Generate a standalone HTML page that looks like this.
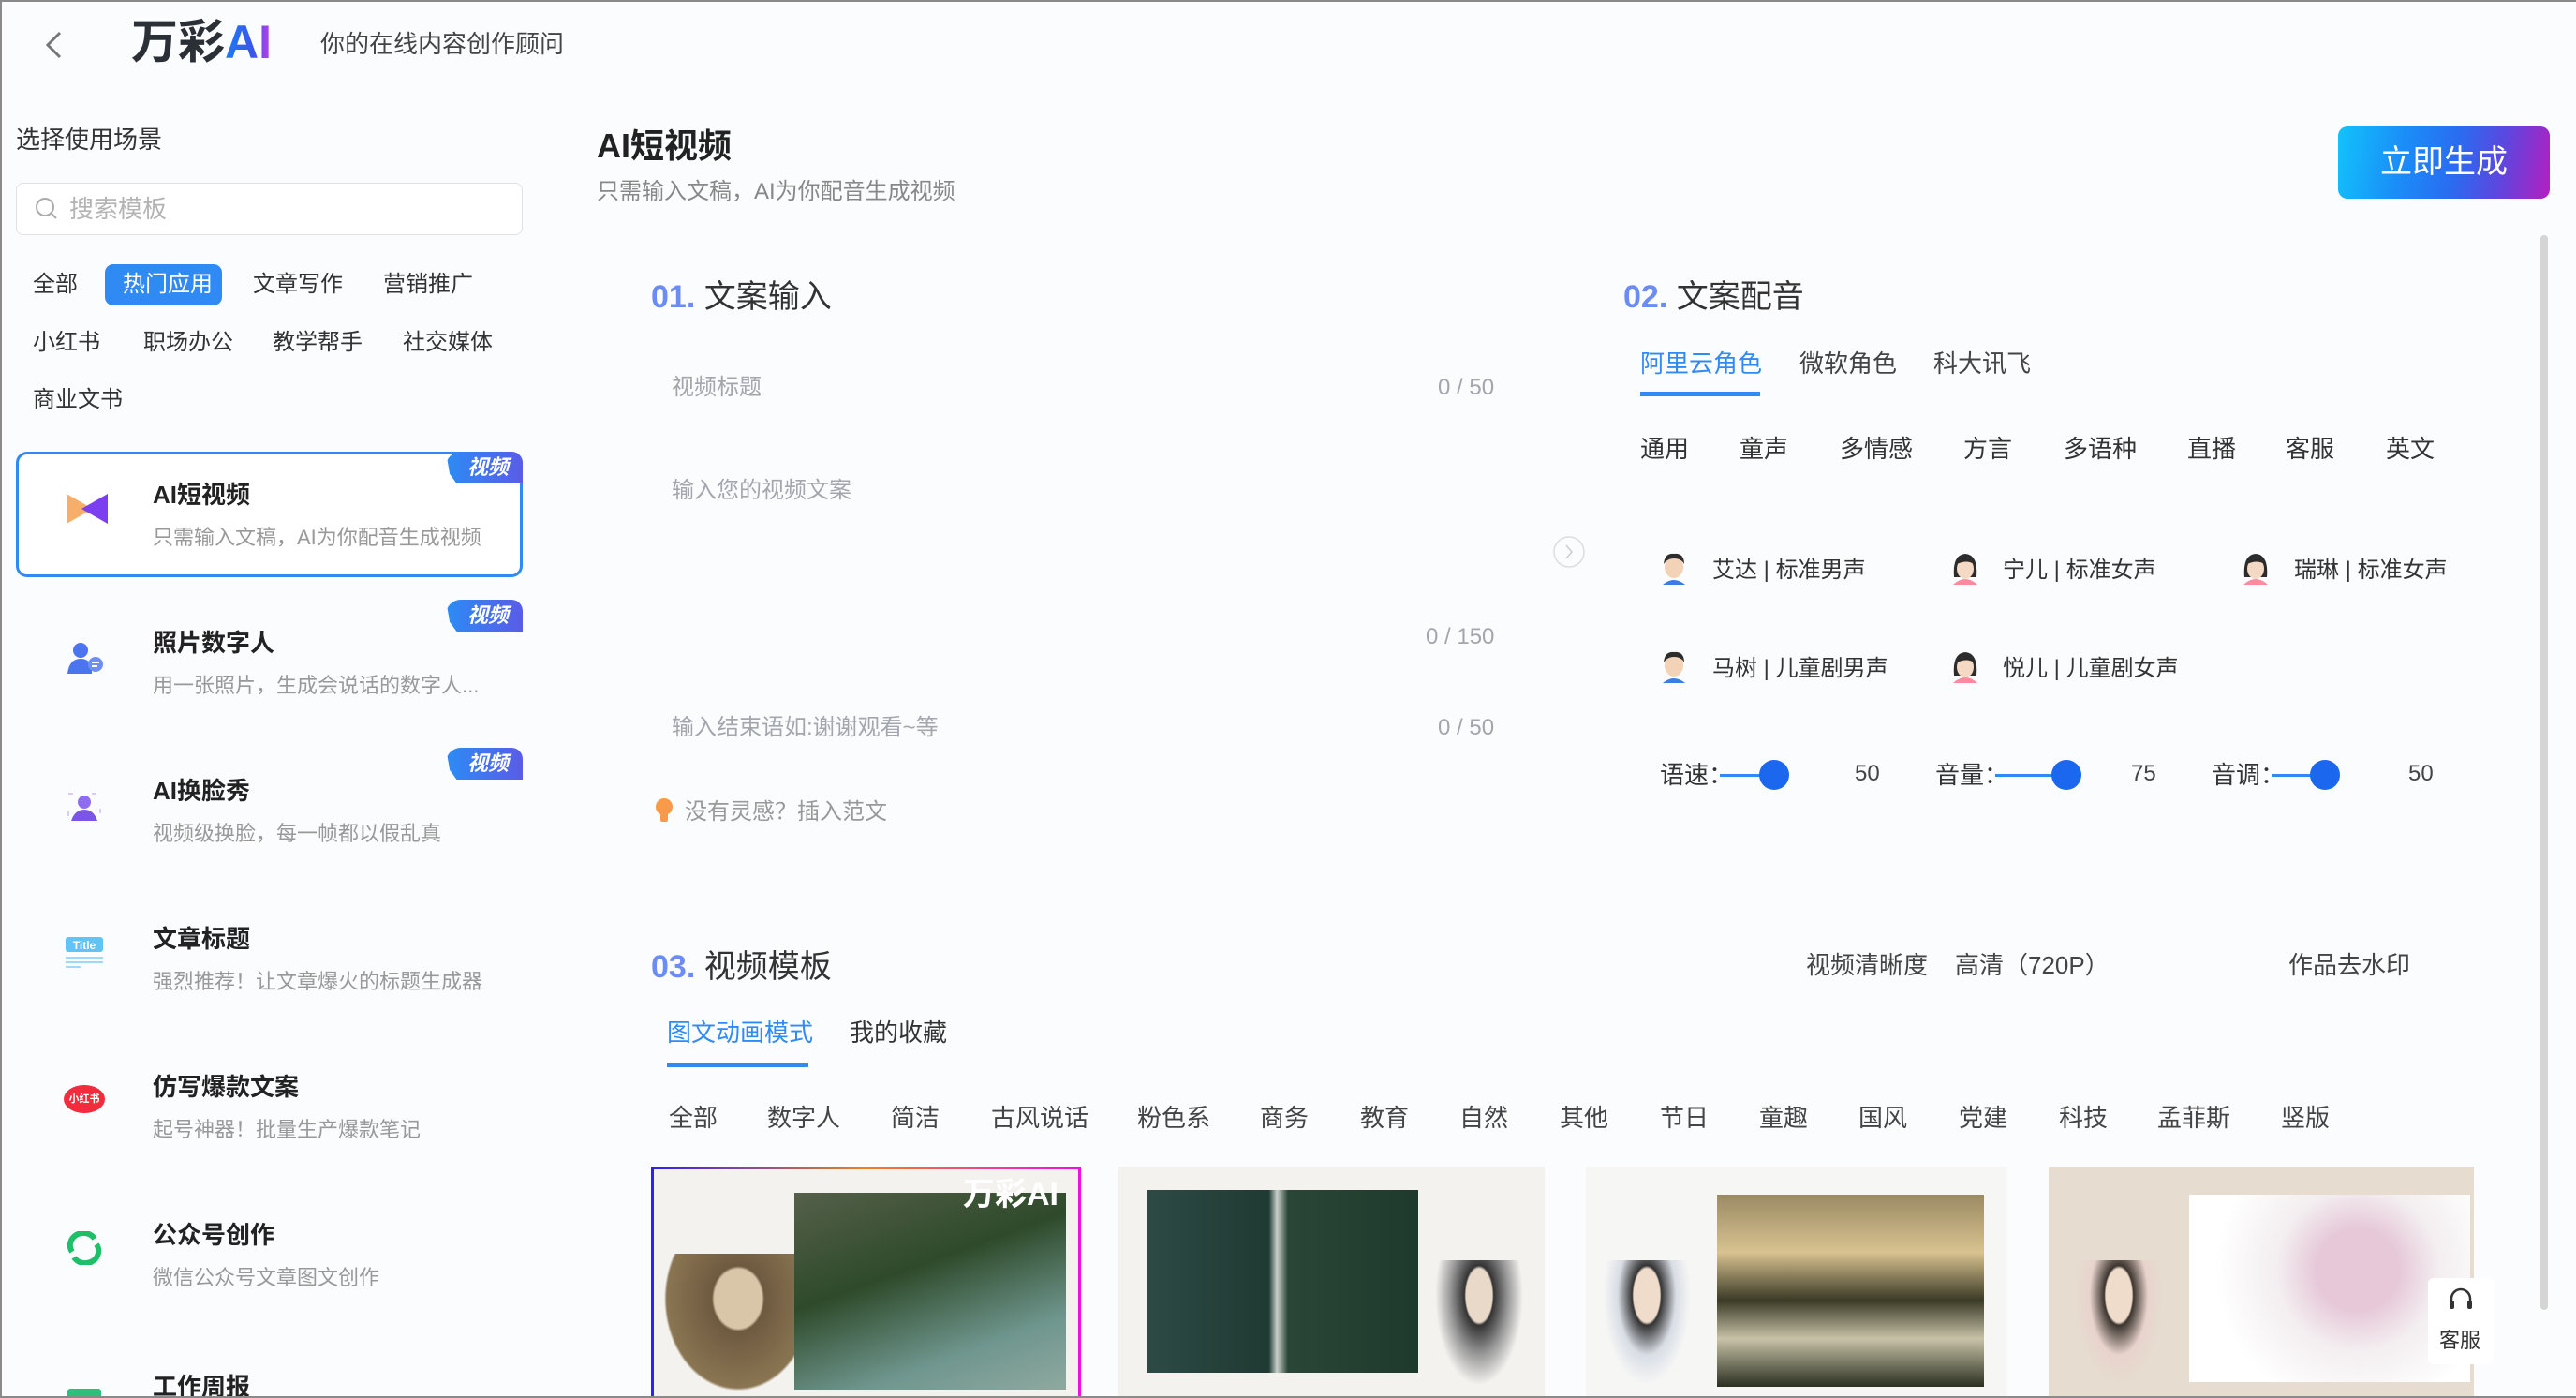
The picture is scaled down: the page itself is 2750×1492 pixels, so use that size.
<!DOCTYPE html>
<html style="width:2750px;height:1492px;overflow:hidden"><head><meta charset="utf-8">
<style>
*{margin:0;padding:0;box-sizing:border-box}
html,body{width:2750px;height:1492px;overflow:hidden}
body{background:#fbfcfd;font-family:"Liberation Sans","Noto Sans CJK SC",sans-serif;color:#333;position:relative}
.a{position:absolute;white-space:nowrap;line-height:1}
.frame{position:absolute;left:0;top:0;width:2750px;height:1492px;border:2px solid #8a8a8a;border-right:none;pointer-events:none}
.g{color:#a3a6ad}
.t24{font-size:24px}.t26{font-size:26px}.t22{font-size:22px}
.card{position:absolute;left:17px;width:541px;height:134px}
.card .tt{position:absolute;left:146px;top:26px;font-size:26px;font-weight:bold;color:#222}
.card .dd{position:absolute;left:146px;top:74px;font-size:22px;color:#999}
.badge{position:absolute;right:0;top:0;width:82px;height:34px;background:linear-gradient(90deg,#2c8cf4,#5a5ce8);border-radius:16px 12px 0 0;clip-path:polygon(0 0,100% 0,100% 100%,14% 100%,5% 70%);color:#fff;font-size:22px;font-style:italic;font-weight:bold;text-align:center;line-height:34px;padding-left:8px}
.sec{font-size:34px;color:#333}
.sec b{color:#6b8cf5;font-weight:bold}
.thumb{position:absolute;top:1245px;height:247px;overflow:hidden;background:#f3f2ef}
</style></head><body>

<svg class="a" style="left:46px;top:32px" width="22" height="32" viewBox="0 0 22 32"><path d="M18 3 L5 16 L18 29" fill="none" stroke="#777" stroke-width="3"/></svg>
<div class="a" style="left:140px;top:20px;font-size:50px;font-weight:bold;color:#2b2f36">万彩<span style="background:linear-gradient(90deg,#1c7cf5,#3a57e8 60%,#c43de6);-webkit-background-clip:text;background-clip:text;color:transparent">AI</span></div>
<div class="a t26" style="left:342px;top:34px;color:#444">你的在线内容创作顾问</div>

<div class="a t26" style="left:17px;top:136px;color:#333">选择使用场景</div>
<div class="a" style="left:17px;top:195px;width:541px;height:56px;border:1px solid #dfe1e6;border-radius:8px;background:#fff"></div>
<svg class="a" style="left:36px;top:209px" width="26" height="26"><circle cx="12" cy="12" r="9" fill="none" stroke="#aaa" stroke-width="2"/><path d="M19 19 L24 24" stroke="#aaa" stroke-width="2"/></svg>
<div class="a t26" style="left:74px;top:210px;color:#b4b4b4">搜索模板</div>

<div class="a" style="left:112px;top:282px;width:125px;height:44px;background:#2f8bf3;border-radius:9px"></div>
<div class="a t24" style="left:35px;top:292px;color:#333">全部</div>
<div class="a t24" style="left:131px;top:292px;color:#fff">热门应用</div>
<div class="a t24" style="left:270px;top:292px;color:#333">文章写作</div>
<div class="a t24" style="left:409px;top:292px;color:#333">营销推广</div>
<div class="a t24" style="left:35px;top:354px;color:#333">小红书</div>
<div class="a t24" style="left:153px;top:354px;color:#333">职场办公</div>
<div class="a t24" style="left:291px;top:354px;color:#333">教学帮手</div>
<div class="a t24" style="left:430px;top:354px;color:#333">社交媒体</div>
<div class="a t24" style="left:35px;top:415px;color:#333">商业文书</div>

<div class="card" style="top:482px;border:3px solid #2f8bf3;border-radius:12px;background:#fff">
 <div class="badge" style="right:-3px;top:-3px">视频</div>
 <svg style="position:absolute;left:51px;top:42px" width="44" height="32"><polygon points="0,0 28,16 0,32" fill="#f5a55a" opacity=".9"/><polygon points="44,0 16,16 44,32" fill="#7b3ff0"/></svg>
 <div class="tt" style="left:143px;top:23px">AI短视频</div><div class="dd" style="left:143px;top:71px">只需输入文稿，AI为你配音生成视频</div>
</div>
<div class="card" style="top:640px"><div class="badge">视频</div>
 <svg style="position:absolute;left:55px;top:45px" width="40" height="38"><circle cx="14" cy="9" r="8" fill="#4d74f0"/><path d="M0 34 Q2 18 14 18 Q24 18 26 28 L26 34Z" fill="#4d74f0"/><circle cx="30" cy="24" r="8" fill="#6f8ef5"/><path d="M26 22h8M26 26h6" stroke="#fff" stroke-width="2"/></svg>
 <div class="tt">照片数字人</div><div class="dd">用一张照片，生成会说话的数字人...</div></div>
<div class="card" style="top:798px"><div class="badge">视频</div>
 <svg style="position:absolute;left:55px;top:48px" width="36" height="30"><rect x="1" y="1" width="34" height="28" fill="none" stroke="#b69cf5" stroke-dasharray="5 20"/><circle cx="18" cy="10" r="7" fill="#8f6cf0"/><path d="M4 30 Q8 18 18 18 Q28 18 32 30Z" fill="#7b55e8"/></svg>
 <div class="tt">AI换脸秀</div><div class="dd">视频级换脸，每一帧都以假乱真</div></div>
<div class="card" style="top:956px">
 <svg style="position:absolute;left:53px;top:44px" width="40" height="36"><rect x="0" y="0" width="40" height="16" rx="3" fill="#62c3f7"/><text x="20" y="13" font-size="12" fill="#fff" font-weight="bold" text-anchor="middle" font-family="Liberation Sans">Title</text><rect x="0" y="21" width="40" height="2" fill="#9ed8fa"/><rect x="0" y="26" width="40" height="2" fill="#9ed8fa"/><rect x="0" y="31" width="16" height="2" fill="#9ed8fa"/></svg>
 <div class="tt">文章标题</div><div class="dd">强烈推荐！让文章爆火的标题生成器</div></div>
<div class="card" style="top:1114px">
 <div style="position:absolute;left:51px;top:44px;width:44px;height:30px;border-radius:50%;background:#f12c3d;color:#fff;font-size:11px;font-weight:bold;text-align:center;line-height:30px">小红书</div>
 <div class="tt">仿写爆款文案</div><div class="dd">起号神器！批量生产爆款笔记</div></div>
<div class="card" style="top:1272px">
 <svg style="position:absolute;left:54px;top:42px" width="38" height="36"><path d="M6 22 A14 13 0 0 1 30 8" fill="none" stroke="#1fbf6a" stroke-width="6"/><path d="M32 14 A14 13 0 0 1 8 28" fill="none" stroke="#1fbf6a" stroke-width="6"/></svg>
 <div class="tt">公众号创作</div><div class="dd">微信公众号文章图文创作</div></div>
<div class="card" style="top:1430px">
 <div style="position:absolute;left:55px;top:52px;width:36px;height:12px;background:#2bc07c;border-radius:3px 3px 0 0"></div>
 <div class="tt" style="top:30px">工作周报</div></div>

<div class="a" style="left:637px;top:138px;font-size:36px;font-weight:bold;color:#222">AI短视频</div>
<div class="a t24" style="left:637px;top:193px;color:#888">只需输入文稿，AI为你配音生成视频</div>
<div class="a" style="left:2496px;top:135px;width:226px;height:77px;border-radius:10px;background:linear-gradient(100deg,#12c3fb 0%,#1a8ef8 30%,#2a6cf0 55%,#5a48e0 75%,#b41ec0 100%);color:#fff;font-size:34px;text-align:center;line-height:77px">立即生成</div>
<div class="a" style="left:2712px;top:251px;width:8px;height:1147px;background:#d5d5d5;border-radius:4px"></div>

<div class="a sec" style="left:695px;top:300px"><b>01.</b> 文案输入</div>
<div class="a t24 g" style="left:717px;top:402px">视频标题</div>
<div class="a t24 g" style="left:1535px;top:402px">0 / 50</div>
<div class="a t24 g" style="left:717px;top:512px">输入您的视频文案</div>
<div class="a t24 g" style="left:1522px;top:668px">0 / 150</div>
<div class="a t24 g" style="left:717px;top:765px">输入结束语如:谢谢观看~等</div>
<div class="a t24 g" style="left:1535px;top:765px">0 / 50</div>
<svg class="a" style="left:698px;top:850px" width="22" height="30"><circle cx="11" cy="11" r="9" fill="#f89a4a"/><rect x="7" y="18" width="8" height="9" rx="2" fill="#f89a4a"/></svg>
<div class="a t24" style="left:731px;top:855px;color:#999">没有灵感？插入范文</div>
<svg class="a" style="left:1657px;top:571px" width="36" height="36"><circle cx="18" cy="18" r="16" fill="none" stroke="#ddd" stroke-width="1.5"/><path d="M15 11 L21 18 L15 25" fill="none" stroke="#ccc" stroke-width="1.5"/></svg>

<div class="a sec" style="left:1733px;top:300px"><b>02.</b> 文案配音</div>
<div class="a t26" style="left:1751px;top:375px;color:#2f8bf3">阿里云角色</div>
<div class="a t26" style="left:1921px;top:375px;color:#444">微软角色</div>
<div class="a t26" style="left:2064px;top:375px;color:#444">科大讯飞</div>
<div class="a" style="left:1751px;top:418px;width:128px;height:5px;background:#2f8bf3"></div>
<div class="a t26" style="left:1751px;top:466px;color:#333">通用</div>
<div class="a t26" style="left:1857px;top:466px;color:#333">童声</div>
<div class="a t26" style="left:1964px;top:466px;color:#333">多情感</div>
<div class="a t26" style="left:2096px;top:466px;color:#333">方言</div>
<div class="a t26" style="left:2203px;top:466px;color:#333">多语种</div>
<div class="a t26" style="left:2335px;top:466px;color:#333">直播</div>
<div class="a t26" style="left:2440px;top:466px;color:#333">客服</div>
<div class="a t26" style="left:2547px;top:466px;color:#333">英文</div>

<svg width="0" height="0" style="position:absolute"><defs>
<g id="m"><path d="M4 36 Q16 26 28 36Z" fill="#3b7de6"/><ellipse cx="16" cy="17" rx="10" ry="12" fill="#f2d3b8"/><path d="M5 14 Q6 2 16 3 Q27 2 27 14 Q24 8 16 8 Q9 8 5 14Z" fill="#2c2c2c"/></g>
<g id="f"><path d="M3 36 Q16 24 29 36Z" fill="#ff8aa0"/><path d="M4 28 Q2 4 16 3 Q30 4 28 28Z" fill="#2c2c2c"/><ellipse cx="16" cy="19" rx="9" ry="11" fill="#f4d9c4"/><path d="M7 14 Q10 6 16 6 Q23 6 25 14 Q18 9 7 14Z" fill="#2c2c2c"/></g>
</defs></svg>
<svg class="a" style="left:1771px;top:588px" width="32" height="40"><use href="#m"/></svg>
<div class="a t24" style="left:1828px;top:597px;color:#333">艾达 | 标准男声</div>
<svg class="a" style="left:2082px;top:588px" width="32" height="40"><use href="#f"/></svg>
<div class="a t24" style="left:2138px;top:597px;color:#333">宁儿 | 标准女声</div>
<svg class="a" style="left:2392px;top:588px" width="32" height="40"><use href="#f"/></svg>
<div class="a t24" style="left:2449px;top:597px;color:#333">瑞琳 | 标准女声</div>
<svg class="a" style="left:1771px;top:693px" width="32" height="40"><use href="#m"/></svg>
<div class="a t24" style="left:1828px;top:702px;color:#333">马树 | 儿童剧男声</div>
<svg class="a" style="left:2082px;top:693px" width="32" height="40"><use href="#f"/></svg>
<div class="a t24" style="left:2138px;top:702px;color:#333">悦儿 | 儿童剧女声</div>

<div class="a t26" style="left:1772px;top:814px;color:#333">语速：</div>
<div class="a" style="left:1836px;top:826px;width:60px;height:3px;background:#2f8bf3"></div>
<div class="a" style="left:1878px;top:811px;width:32px;height:32px;border-radius:50%;background:#1b67ee"></div>
<div class="a t24" style="left:1980px;top:814px;color:#444">50</div>
<div class="a t26" style="left:2066px;top:814px;color:#333">音量：</div>
<div class="a" style="left:2130px;top:826px;width:80px;height:3px;background:#2f8bf3"></div>
<div class="a" style="left:2190px;top:811px;width:32px;height:32px;border-radius:50%;background:#1b67ee"></div>
<div class="a t24" style="left:2275px;top:814px;color:#444">75</div>
<div class="a t26" style="left:2361px;top:814px;color:#333">音调：</div>
<div class="a" style="left:2425px;top:826px;width:60px;height:3px;background:#2f8bf3"></div>
<div class="a" style="left:2466px;top:811px;width:32px;height:32px;border-radius:50%;background:#1b67ee"></div>
<div class="a t24" style="left:2571px;top:814px;color:#444">50</div>

<div class="a sec" style="left:695px;top:1015px"><b>03.</b> 视频模板</div>
<div class="a t26" style="left:1928px;top:1017px;color:#444">视频清晰度</div>
<div class="a t26" style="left:2087px;top:1017px;color:#444">高清（720P）</div>
<div class="a t26" style="left:2443px;top:1017px;color:#444">作品去水印</div>
<div class="a t26" style="left:712px;top:1089px;color:#2f8bf3">图文动画模式</div>
<div class="a t26" style="left:907px;top:1089px;color:#333">我的收藏</div>
<div class="a" style="left:712px;top:1134px;width:151px;height:5px;background:#2f8bf3"></div>
<div class="a t26" style="left:714px;top:1180px;color:#444">全部</div>
<div class="a t26" style="left:819px;top:1180px;color:#444">数字人</div>
<div class="a t26" style="left:951px;top:1180px;color:#444">简洁</div>
<div class="a t26" style="left:1058px;top:1180px;color:#444">古风说话</div>
<div class="a t26" style="left:1214px;top:1180px;color:#444">粉色系</div>
<div class="a t26" style="left:1345px;top:1180px;color:#444">商务</div>
<div class="a t26" style="left:1452px;top:1180px;color:#444">教育</div>
<div class="a t26" style="left:1558px;top:1180px;color:#444">自然</div>
<div class="a t26" style="left:1665px;top:1180px;color:#444">其他</div>
<div class="a t26" style="left:1772px;top:1180px;color:#444">节日</div>
<div class="a t26" style="left:1878px;top:1180px;color:#444">童趣</div>
<div class="a t26" style="left:1984px;top:1180px;color:#444">国风</div>
<div class="a t26" style="left:2091px;top:1180px;color:#444">党建</div>
<div class="a t26" style="left:2198px;top:1180px;color:#444">科技</div>
<div class="a t26" style="left:2303px;top:1180px;color:#444">孟菲斯</div>
<div class="a t26" style="left:2435px;top:1180px;color:#444">竖版</div>

<div class="thumb" style="left:695px;width:459px;border:3px solid;border-image:linear-gradient(90deg,#3020f0,#f08020,#f010e0) 1;border-bottom:none">
 <div style="position:absolute;left:150px;top:25px;width:290px;height:210px;background:linear-gradient(160deg,#55604a,#2e4a2a 40%,#6f968e 75%,#8fa9a0)"></div>
 <div style="position:absolute;left:0;top:90px;width:150px;height:160px;background:radial-gradient(ellipse at 60% 30%,#d9c6a9 20%,#6e5a40 22%,#8a7552 60%,transparent 62%)"></div>
 <div class="a" style="left:330px;top:10px;font-size:34px;font-weight:bold;color:#fff">万彩AI</div>
</div>
<div class="thumb" style="left:1194px;width:455px">
 <div style="position:absolute;left:30px;top:25px;width:290px;height:195px;background:linear-gradient(90deg,#2d4a44,#1f3a33 45%,#c8d0cc 48%,#2a4636 52%,#1e3a2c)"></div>
 <div style="position:absolute;left:330px;top:100px;width:110px;height:150px;background:radial-gradient(ellipse at 50% 25%,#e9d9c9 18%,#333 20%,#9a9a9a 40%,transparent 60%)"></div>
</div>
<div class="thumb" style="left:1693px;width:450px;background:#f6f6f5">
 <div style="position:absolute;left:140px;top:30px;width:285px;height:205px;background:linear-gradient(180deg,#9a8a64,#d8c290 30%,#3a3a26 55%,#c8c2a8 75%,#2a3020)"></div>
 <div style="position:absolute;left:10px;top:100px;width:110px;height:150px;background:radial-gradient(ellipse at 50% 25%,#f0dccb 18%,#333 20%,#d8dde5 40%,transparent 60%)"></div>
</div>
<div class="thumb" style="left:2187px;width:454px;background:#e6dccf">
 <div style="position:absolute;left:150px;top:30px;width:300px;height:200px;background:radial-gradient(circle at 60% 40%,#e6c8d8 20%,#f3eef0 40%,#fff 70%)"></div>
 <div style="position:absolute;left:20px;top:100px;width:110px;height:150px;background:radial-gradient(ellipse at 50% 25%,#f0dccb 18%,#3b342e 20%,#e8d3cc 40%,transparent 60%)"></div>
</div>
<div class="a" style="left:2592px;top:1364px;width:70px;height:92px;background:#fff;border-radius:6px"></div>
<svg class="a" style="left:2612px;top:1372px" width="30" height="32"><path d="M5 18 V14 A10 10 0 0 1 25 14 V18" fill="none" stroke="#333" stroke-width="2.5"/><rect x="3" y="16" width="5" height="9" rx="2" fill="#333"/><rect x="22" y="16" width="5" height="9" rx="2" fill="#333"/></svg>
<div class="a t22" style="left:2604px;top:1420px;color:#333">客服</div>

<div class="frame"></div>
</body></html>
